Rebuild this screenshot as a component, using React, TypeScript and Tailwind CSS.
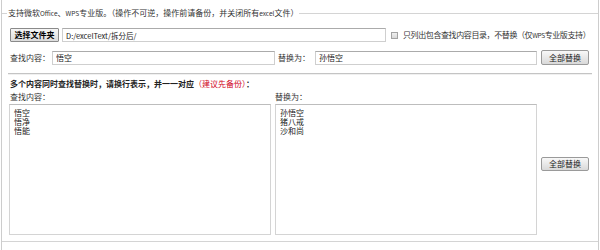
export default function App() {
  return (
    <div className="h-[250px] w-[600px] bg-white px-[1px] font-['Noto_Sans_CJK_SC',sans-serif] text-[8px] text-[#222]">
      <div className="h-full border-x border-[#cdcdcd] pt-[6px]">
        <fieldset className="h-[236px] border-y border-[#d4d4d4] pl-[8px] pr-[8px]">
          <legend className="-ml-[3px] px-[1px] leading-[14px] whitespace-nowrap text-[#333]">
            支持微软<span className="text-[6.5px]">Office</span>、<span className="text-[6.5px]">WPS</span>
            专业版。（操作不可逆，操作前请备份，并关闭所有<span className="text-[6.5px]">excel</span>文件）
          </legend>

          <div className="mt-[8px] flex h-[14px] items-center">
            <button
              type="button"
              className="h-[14px] w-[49px] rounded-[1px] border border-[#8a8a8a] bg-gradient-to-b from-[#f6f6f6] to-[#dcdcdc] text-[8px] leading-[12px] font-bold text-black"
            >
              选择文件夹
            </button>
            <input
              readOnly
              value="D:/excelText/拆分后/"
              className="ml-[3px] h-[14px] w-[324px] border border-[#cfcfcf] border-t-[#ababab] px-[3px] text-[7.5px] leading-[12px] text-[#222] outline-none"
            />
            <span className="ml-[5px] h-[7px] w-[7px] shrink-0 border border-[#a3a3a3] bg-gradient-to-b from-[#f0f0f0] to-[#d8d8d8]" />
            <span className="ml-[5px] leading-[12px] tracking-[-0.4px] whitespace-nowrap text-[#333]">
              只列出包含查找内容目录，不替换（仅<span className="text-[6.5px]">WPS</span>专业版支持）
            </span>
          </div>

          <div className="mt-[8px] flex h-[15px] items-center">
            <span className="w-[42px] leading-[12px] text-[#333]">查找内容：</span>
            <input
              readOnly
              value="悟空"
              className="h-[14px] w-[223px] border border-[#cfcfcf] border-t-[#ababab] px-[3px] text-[8px] leading-[12px] text-[#222] outline-none"
            />
            <span className="ml-[3px] w-[37px] leading-[12px] text-[#333]">替换为：</span>
            <input
              readOnly
              value="孙悟空"
              className="h-[14px] w-[222px] border border-[#cfcfcf] border-t-[#ababab] px-[3px] text-[8px] leading-[12px] text-[#222] outline-none"
            />
            <button
              type="button"
              className="ml-[4px] h-[15px] w-[48px] rounded-[2px] border border-[#9a9a9a] bg-gradient-to-b from-[#f8f8f8] to-[#d9d9d9] text-[8px] leading-[12px] text-[#222]"
            >
              全部替换
            </button>
          </div>

          <div className="-mx-[2px] mt-[8px] border-t border-[#c4c4c4] shadow-[0_1px_0_#f0f0f0]" />

          <p className="mt-[4px] leading-[12px] font-bold text-[#222]">
            多个内容同时查找替换时，请换行表示，并一一对应
            <span className="font-normal text-[#d0021b]">（建议先备份）</span>：
          </p>

          <div className="mt-[1px] flex">
            <div className="-ml-[1px] flex w-[262px] flex-col">
              <span className="pl-[1px] leading-[12px] text-[#333]">查找内容：</span>
              <textarea
                readOnly
                defaultValue={"悟空\n悟净\n悟能"}
                className="mt-[1px] h-[131px] w-[262px] resize-none border border-[#d4d4d4] border-t-[#bdbdbd] px-[4px] py-[3px] text-[8px] leading-[9px] text-[#222] outline-none"
              />
            </div>
            <div className="ml-[4px] flex w-[262px] flex-col">
              <span className="leading-[12px] text-[#333]">替换为：</span>
              <textarea
                readOnly
                defaultValue={"孙悟空\n猪八戒\n沙和尚"}
                className="mt-[1px] h-[131px] w-[262px] resize-none border border-[#d4d4d4] border-t-[#bdbdbd] px-[4px] py-[3px] text-[8px] leading-[9px] text-[#222] outline-none"
              />
            </div>
            <button
              type="button"
              className="mt-[66px] ml-[4px] h-[14px] w-[48px] self-start rounded-[2px] border border-[#9a9a9a] bg-gradient-to-b from-[#f8f8f8] to-[#d9d9d9] text-[8px] leading-[12px] text-[#222]"
            >
              全部替换
            </button>
          </div>
        </fieldset>
      </div>
    </div>
  );
}
